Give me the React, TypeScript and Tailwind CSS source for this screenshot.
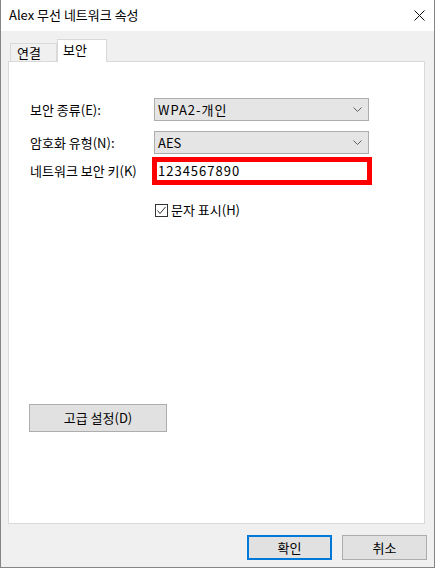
import React from "react";

const Chevron = () => (
  <svg width="9" height="5" viewBox="0 0 9 5" className="mr-[6px]">
    <polyline points="0.5,0.5 4.5,4.5 8.5,0.5" fill="none" stroke="#606060" strokeWidth="1" />
  </svg>
);

const SelectBox = ({ value, wide }: { value: string; wide?: boolean }) => (
  <div className="flex h-[23px] w-[215px] items-center justify-between border border-[#adadad] bg-[#e5e5e5] pl-[3px]">
    <span className={wide ? "tracking-[1px]" : ""}>{value}</span>
    <Chevron />
  </div>
);

const App = () => {
  return (
    <div className="flex h-[568px] w-[435px] flex-col border-x border-b border-[#858585] bg-[#f0f0f0] font-['Noto_Sans_CJK_KR',sans-serif] text-[13px] leading-[16px] text-black">
      {/* title bar */}
      <div className="flex h-[31px] items-center justify-between bg-white pl-[8px] pr-[9px]">
        <span className="pb-px">Alex 무선 네트워크 속성</span>
        <svg width="11" height="11" viewBox="0 0 11 11">
          <path d="M0.5 0.5 L10.5 10.5 M10.5 0.5 L0.5 10.5" stroke="#111" strokeWidth="1" />
        </svg>
      </div>

      {/* tabs */}
      <div className="mt-[8px] flex items-end pl-[9px]">
        <div className="flex h-[18px] w-[47px] items-start border border-b-0 border-[#d9d9d9] bg-[#f0f0f0] pl-[6px] pt-px">
          연결
        </div>
        <div className="relative z-10 -mb-px flex h-[23px] w-[50px] items-start border border-b-0 border-[#d9d9d9] bg-white pl-[5px] pt-[2px]">
          보안
        </div>
      </div>

      {/* panel */}
      <div className="ml-[7px] flex h-[463px] w-[417px] flex-col border border-[#d9d9d9] bg-white pl-[20px] pt-[36px]">
        <div className="flex flex-col gap-[10px]">
          <div className="flex h-[23px] items-center">
            <span className="w-[125px] pl-px">보안 종류(E):</span>
            <SelectBox value="WPA2-개인" wide />
          </div>
          <div className="flex h-[23px] items-center">
            <span className="w-[125px] pl-px">암호화 유형(N):</span>
            <SelectBox value="AES" />
          </div>
        </div>
        <div className="mt-[3px] flex h-[28px] items-center">
          <span className="w-[123px] pl-px">네트워크 보안 키(K)</span>
          <div className="flex h-[28px] w-[220px] items-center border-[5px] border-[#ff0000] bg-white pl-px tracking-[1px]">
            1234567890
          </div>
        </div>
        <div className="mt-[17px] flex items-center pl-[126px]">
          <div className="flex h-[13px] w-[13px] items-center justify-center border border-[#333] bg-white">
            <svg width="11" height="11" viewBox="0 0 11 11">
              <polyline points="1.5,5.5 4,8.5 9.5,2" fill="none" stroke="#333" strokeWidth="1" />
            </svg>
          </div>
          <span className="ml-[3px]">문자 표시(H)</span>
        </div>
        <button className="mt-[186px] flex h-[28px] w-[138px] items-center justify-center border border-[#adadad] bg-[#e1e1e1]">
          고급 설정(D)
        </button>
      </div>

      {/* footer buttons */}
      <div className="mt-[11px] flex justify-end gap-[10px] pr-[7px]">
        <button className="flex h-[25px] w-[85px] items-center justify-center border-2 border-[#0078d7] bg-[#e1e1e1]">
          확인
        </button>
        <button className="flex h-[25px] w-[85px] items-center justify-center border border-[#adadad] bg-[#e1e1e1]">
          취소
        </button>
      </div>
    </div>
  );
};

export default App;
